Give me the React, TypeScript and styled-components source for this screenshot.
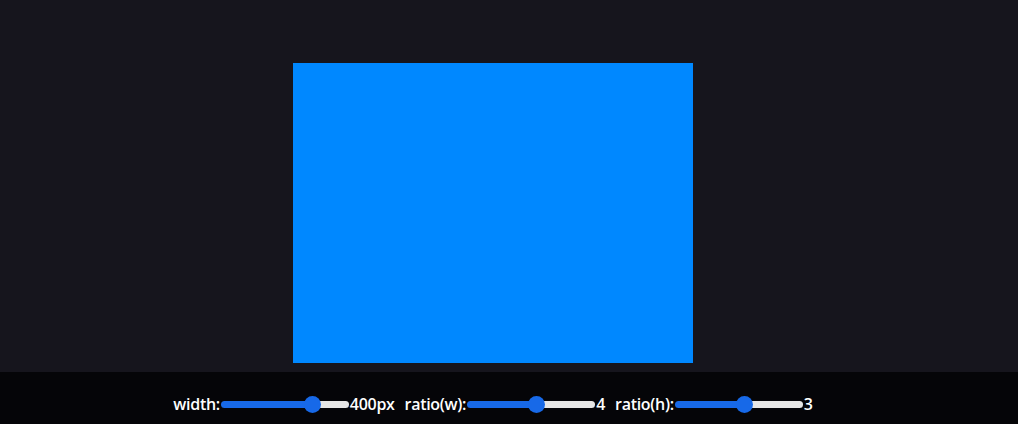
import React, { ReactElement, useState } from 'react'
import styled, { createGlobalStyle } from 'styled-components'

const GlobalStyle = createGlobalStyle`
  html, body {
    margin: 0;
    padding: 0;
    background: #16151d;
    font-family: "Open Sans", "Noto Sans", sans-serif;
    overflow: hidden;
  }
`

type SliderProps = {
  label: string
  value: number
  min: number
  max: number
  unit?: string
  onChange: (v: number) => void
}

const Slider: React.FC<SliderProps> = ({ label, value, min, max, unit, onChange }): ReactElement => {
  const pct = ((value - min) / (max - min)) * 100
  return (
    <Control>
      <Label>{label}</Label>
      <Range
        type="range"
        min={min}
        max={max}
        value={value}
        onChange={(e) => onChange(Number(e.target.value))}
        style={{
          background: `linear-gradient(to right, #1769e8 0%, #1769e8 ${pct}%, #e6e6e6 ${pct}%, #e6e6e6 100%)`,
        }}
      />
      <Value>
        {value}
        {unit}
      </Value>
    </Control>
  )
}

const App: React.FC = (): ReactElement => {
  const [width, setWidth] = useState(400)
  const [rw, setRw] = useState(4)
  const [rh, setRh] = useState(3)

  return (
    <>
      <GlobalStyle />
      <Stage>
        <Box style={{ width: `${width}px`, height: `${(width * rh) / rw}px` }} />
      </Stage>
      <Bar>
        <Slider label="width:" value={width} min={100} max={500} unit="px" onChange={setWidth} />
        <Slider label="ratio(w):" value={rw} min={1} max={6.45} onChange={setRw} />
        <Slider label="ratio(h):" value={rh} min={1} max={4.64} onChange={setRh} />
      </Bar>
    </>
  )
}

const Stage = styled.main`
  height: 100vh;
  box-sizing: border-box;
  padding: 2px 32px 0 0;
  display: flex;
  align-items: center;
  justify-content: center;
`

const Box = styled.div`
  background: #0088ff;
`

const Bar = styled.footer`
  position: fixed;
  left: 0;
  right: 0;
  bottom: 0;
  height: 52px;
  box-sizing: border-box;
  padding: 12px 32px 0 0;
  background: #050508;
  display: flex;
  align-items: center;
  justify-content: center;
  gap: 10px;
`

const Control = styled.label`
  display: flex;
  align-items: center;
  color: #ffffff;
  font-size: 16px;
  font-weight: 600;
  letter-spacing: -0.3px;
`

const Label = styled.span``

const Value = styled.span``

const Range = styled.input`
  -webkit-appearance: none;
  appearance: none;
  width: 128px;
  height: 7px;
  margin: 0 1px;
  border-radius: 4px;
  outline: none;

  &::-webkit-slider-thumb {
    -webkit-appearance: none;
    appearance: none;
    width: 17px;
    height: 17px;
    border-radius: 50%;
    background: #1769e8;
    border: none;
    cursor: pointer;
  }
`

export default App
